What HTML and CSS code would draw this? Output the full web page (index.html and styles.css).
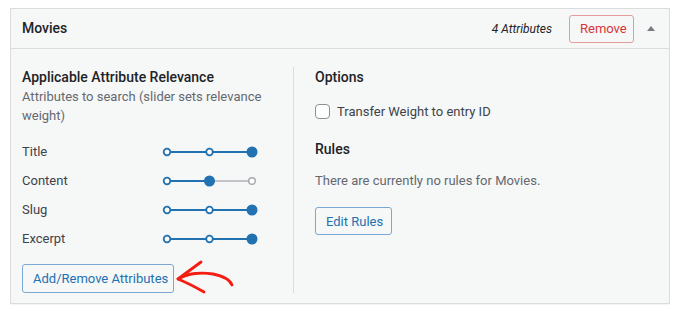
FILE: index.html
```html
<!DOCTYPE html>
<html lang="en">

<head>
    <meta charset="UTF-8">
    <meta name="viewport" content="width=device-width, initial-scale=1.0">
    <title>Movies - Attributes</title>
    <link rel="stylesheet" href="styles.css">
</head>

<body>
    <div class="panel">
        <!-- Header -->
        <div class="panel-header">
            <h2 class="panel-title">Movies</h2>
            <span class="attr-count">4 Attributes</span>
            <button class="btn btn-remove">Remove</button>
            <span class="toggle"></span>
        </div>

        <div class="panel-body">
            <!-- Left column -->
            <div class="col col-left">
                <h3 class="section-title">Applicable Attribute Relevance</h3>
                <p class="section-desc">Attributes to search (slider sets relevance weight)</p>

                <div class="attr-list">
                    <div class="attr-row">
                        <span class="attr-label">Title</span>
                        <svg class="slider" width="96" height="14" viewBox="0 0 96 14">
                            <line x1="5" y1="7" x2="90" y2="7" class="track-on" />
                            <circle cx="5" cy="7" r="3.3" class="dot" />
                            <circle cx="47.5" cy="7" r="3.3" class="dot" />
                            <circle cx="90" cy="7" r="5.5" class="knob" />
                        </svg>
                    </div>
                    <div class="attr-row">
                        <span class="attr-label">Content</span>
                        <svg class="slider" width="96" height="14" viewBox="0 0 96 14">
                            <line x1="47.5" y1="7" x2="90" y2="7" class="track-off" />
                            <line x1="5" y1="7" x2="47.5" y2="7" class="track-on" />
                            <circle cx="5" cy="7" r="3.3" class="dot" />
                            <circle cx="90" cy="7" r="3.3" class="dot-off" />
                            <circle cx="47.5" cy="7" r="5.5" class="knob" />
                        </svg>
                    </div>
                    <div class="attr-row">
                        <span class="attr-label">Slug</span>
                        <svg class="slider" width="96" height="14" viewBox="0 0 96 14">
                            <line x1="5" y1="7" x2="90" y2="7" class="track-on" />
                            <circle cx="5" cy="7" r="3.3" class="dot" />
                            <circle cx="47.5" cy="7" r="3.3" class="dot" />
                            <circle cx="90" cy="7" r="5.5" class="knob" />
                        </svg>
                    </div>
                    <div class="attr-row">
                        <span class="attr-label">Excerpt</span>
                        <svg class="slider" width="96" height="14" viewBox="0 0 96 14">
                            <line x1="5" y1="7" x2="90" y2="7" class="track-on" />
                            <circle cx="5" cy="7" r="3.3" class="dot" />
                            <circle cx="47.5" cy="7" r="3.3" class="dot" />
                            <circle cx="90" cy="7" r="5.5" class="knob" />
                        </svg>
                    </div>
                </div>

                <div class="btn-wrap">
                    <button class="btn btn-secondary">Add/Remove Attributes</button>
                    <!-- hand-drawn arrow pointing at the button -->
                    <svg class="callout" width="64" height="40" viewBox="0 0 64 40">
                        <path d="M4 21 C 14 15, 28 14, 39 16 C 49 18, 56 22, 58 27" />
                        <path d="M27 4 L 4 21 Q 16 26, 30 34" />
                    </svg>
                </div>
            </div>

            <!-- Right column -->
            <div class="col col-right">
                <h3 class="section-title">Options</h3>
                <label class="check">
                    <span class="check-box"></span>
                    Transfer Weight to entry ID
                </label>

                <h3 class="section-title rules-title">Rules</h3>
                <p class="rules-text">There are currently no rules for Movies.</p>
                <button class="btn btn-secondary btn-small">Edit Rules</button>
            </div>
        </div>
    </div>
</body>

</html>
```
FILE: styles.css
```css
body {
    margin: 0;
    padding: 8px 10px;
    background: #fff;
    font-family: Roboto, "Noto Sans", sans-serif;
    color: #1d2327;
}

.panel {
    border: 1px solid #dcdcde;
    background: #f6f7f7;
    box-shadow: 0 1px 1px rgba(0, 0, 0, 0.04);
}

.panel-header {
    display: flex;
    align-items: center;
    height: 39px;
    padding: 0 14px 0 11px;
    border-bottom: 1px solid #dcdcde;
}

.panel-title {
    flex: 1;
    margin: 0;
    font-size: 14px;
    font-weight: 500;
    margin-top: -2px;
}

.attr-count {
    font-size: 12px;
    font-style: italic;
    color: #1d2327;
    margin-right: 17px;
}

.btn {
    font-family: inherit;
    font-size: 13px;
    border-radius: 3px;
    background: #f6f7f7;
    cursor: pointer;
    padding: 0 10px;
    white-space: nowrap;
}

.btn-remove {
    height: 28px;
    width: 65px;
    color: #d63638;
    border: 1px solid #e59c9d;
}

.toggle {
    width: 0;
    height: 0;
    margin-left: 13px;
    border-left: 4px solid transparent;
    border-right: 4px solid transparent;
    border-bottom: 5px solid #787c82;
}

.panel-body {
    display: flex;
    padding: 18px 11px 10px;
}

.col-left {
    width: 271px;
    border-right: 1px solid #dcdcde;
}

.col-right {
    padding-left: 21px;
}

.section-title {
    margin: 0;
    font-size: 14px;
    font-weight: 500;
    line-height: 20px;
}

.section-desc {
    margin: 0;
    font-size: 13px;
    line-height: 19px;
    color: #646970;
    width: 250px;
}

.attr-list {
    margin-top: 12px;
}

.attr-row {
    display: flex;
    align-items: center;
    height: 29px;
}

.attr-label {
    width: 140px;
    font-size: 13px;
    color: #3c434a;
}

.slider .track-on {
    stroke: #2271b1;
    stroke-width: 2;
}

.slider .track-off {
    stroke: #c3c4c7;
    stroke-width: 2;
}

.slider .dot {
    fill: #fff;
    stroke: #2271b1;
    stroke-width: 1.8;
}

.slider .dot-off {
    fill: #fff;
    stroke: #a7aaad;
    stroke-width: 1.5;
}

.slider .knob {
    fill: #2271b1;
}

.btn-wrap {
    position: relative;
    margin-top: 11px;
}

.btn-secondary {
    height: 29px;
    color: #2271b1;
    border: 1px solid #7aa7d4;
}

.btn-wrap .btn-secondary {
    width: 152px;
}

.callout {
    position: absolute;
    left: 152px;
    top: -6px;
    fill: none;
    stroke: #f51d12;
    stroke-width: 2.8;
    stroke-linecap: round;
    stroke-linejoin: round;
}

.check {
    display: flex;
    align-items: center;
    gap: 7px;
    margin-top: 17px;
    font-size: 13px;
    color: #3c434a;
}

.check-box {
    width: 13px;
    height: 13px;
    border: 1px solid #8c8f94;
    border-radius: 4px;
    background: #fff;
}

.rules-title {
    margin-top: 20px;
}

.rules-text {
    margin: 12px 0 0;
    font-size: 13px;
    line-height: 19px;
    color: #646970;
}

.btn-small {
    margin-top: 17px;
    width: 77px;
    height: 28px;
}
```
